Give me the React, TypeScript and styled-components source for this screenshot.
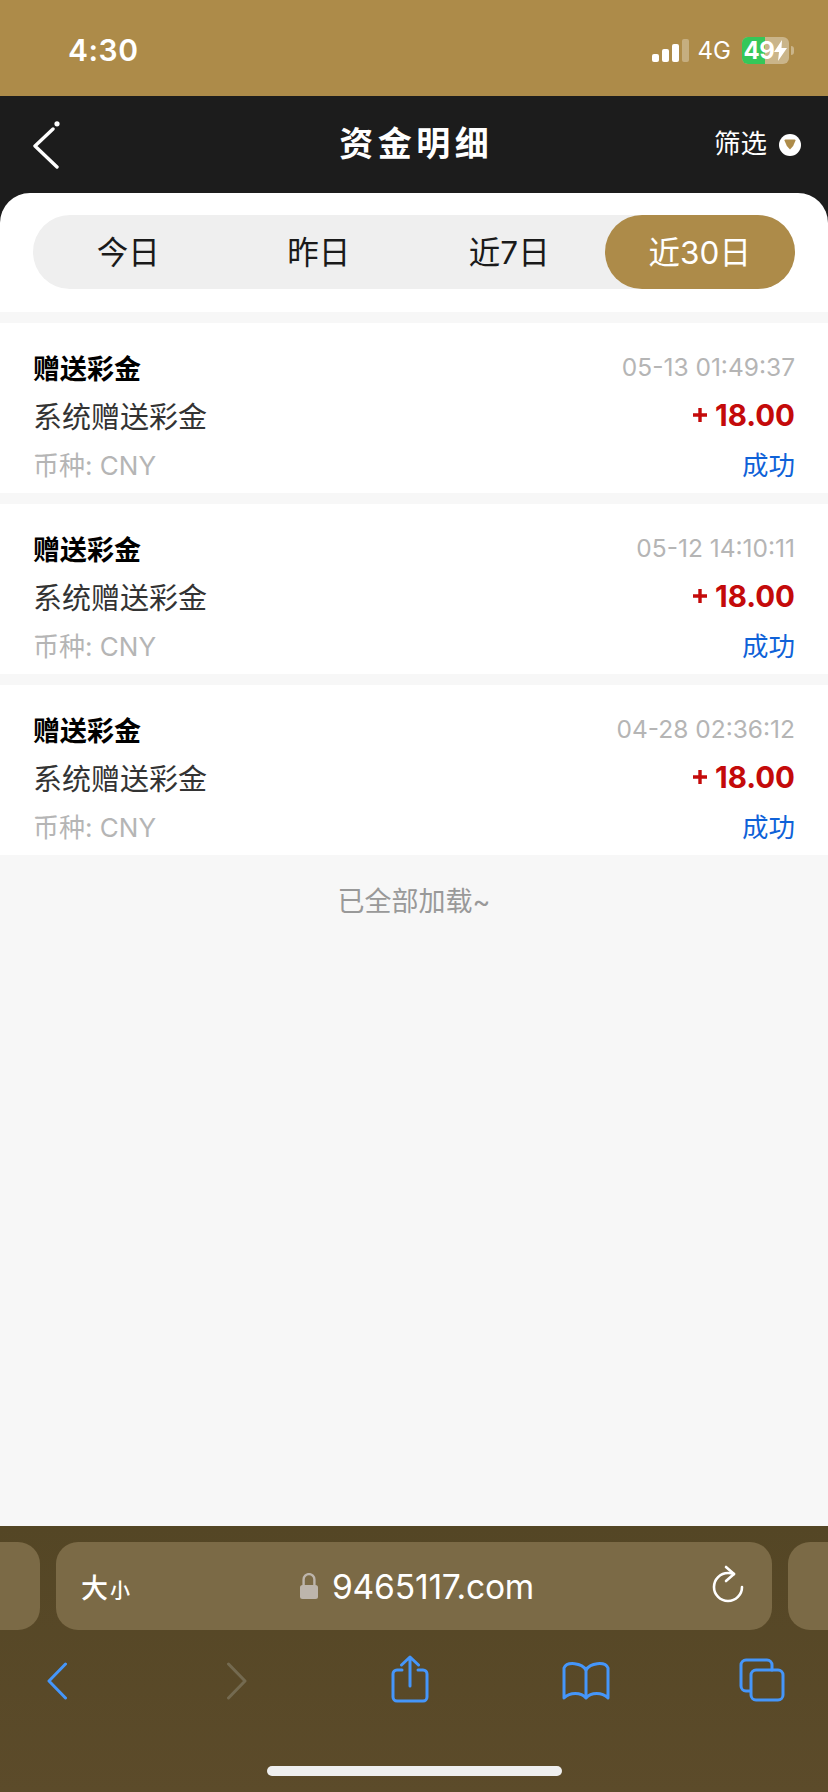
import React from 'react';
import styled, { createGlobalStyle } from 'styled-components';

const GlobalStyle = createGlobalStyle`
  html, body {
    margin: 0;
    padding: 0;
    background: #f7f7f7;
  }
  * {
    box-sizing: border-box;
  }
`;

const CJK = `Inter, 'Noto Sans CJK SC', sans-serif`;

const Page = styled.div`
  width: 828px;
  height: 1792px;
  display: flex;
  flex-direction: column;
  overflow: hidden;
  font-family: ${CJK};
  background: #f7f7f7;
`;

const StatusBar = styled.div`
  height: 96px;
  flex: none;
  background: #ad8b49;
  display: flex;
  align-items: center;
  justify-content: space-between;
  padding: 4px 34px 0 68px;
  color: #fff;
`;

const Clock = styled.div`
  font-size: 30px;
  font-weight: 600;
  letter-spacing: 0.5px;
`;

const StatusRight = styled.div`
  display: flex;
  align-items: center;
`;

const Signal = styled.div`
  display: flex;
  align-items: flex-end;
  gap: 3px;
  height: 24px;
`;

const SignalBar = styled.span<{ $h: number; $off?: boolean }>`
  width: 7px;
  height: ${(p) => p.$h}px;
  border-radius: 2px;
  background: ${(p) => (p.$off ? 'rgba(255,255,255,0.3)' : '#fff')};
`;

const Network = styled.div`
  font-size: 24px;
  margin: 0 11px 0 9px;
`;

const Battery = styled.div`
  position: relative;
  width: 47px;
  height: 27px;
  border-radius: 6px;
  overflow: hidden;
  background: rgba(255,255,255,0.36);
  display: flex;
  align-items: center;
  justify-content: center;
  font-size: 24px;
  font-weight: 700;
  letter-spacing: -0.5px;
`;

const BatteryFill = styled.span`
  position: absolute;
  left: 0;
  top: 0;
  bottom: 0;
  width: 23px;
  background: #35c759;
`;

const BatteryLabel = styled.span`
  position: relative;
  display: flex;
  align-items: center;
`;

const BatteryNub = styled.span`
  width: 3px;
  height: 9px;
  margin-left: 2px;
  border-radius: 0 3px 3px 0;
  background: rgba(255,255,255,0.36);
`;

const NavBar = styled.div`
  height: 97px;
  flex: none;
  background: #1c1c1c;
  display: grid;
  grid-template-columns: 1fr auto 1fr;
  align-items: center;
  padding: 0 27px;
  color: #fff;
`;

const BackIcon = styled.svg`
  display: block;
  margin-left: 6px;
`;

const Title = styled.div`
  font-size: 34px;
  font-weight: 700;
  letter-spacing: 4.5px;
  margin-right: -4.5px;
  padding-bottom: 6px;
`;

const Filter = styled.div`
  justify-self: end;
  display: flex;
  align-items: center;
  gap: 12px;
  font-size: 26.5px;
`;

const FilterLabel = styled.span`
  padding-bottom: 6px;
`;

const FilterDot = styled.span`
  width: 22px;
  height: 22px;
  border-radius: 50%;
  background: #fff;
  display: flex;
  align-items: center;
  justify-content: center;
`;

const SheetBack = styled.div`
  flex: none;
  background: #1c1c1c;
`;

const Sheet = styled.div`
  background: #fff;
  border-radius: 30px 30px 0 0;
  padding: 22px 33px 23px;
`;

const Tabs = styled.div`
  height: 74px;
  border-radius: 37px;
  background: #efefef;
  display: grid;
  grid-template-columns: repeat(4, 1fr);
`;

const Tab = styled.div<{ $active?: boolean }>`
  display: flex;
  align-items: center;
  justify-content: center;
  border-radius: 37px;
  padding-bottom: 4px;
  font-size: 31.5px;
  color: ${(p) => (p.$active ? '#fff' : '#1a1a1a')};
  background: ${(p) => (p.$active ? '#ad8b49' : 'transparent')};
`;

const List = styled.div`
  flex: 1;
  padding-top: 11px;
  display: flex;
  flex-direction: column;
  gap: 11px;
`;

const Card = styled.div`
  height: 170px;
  flex: none;
  background: #fff;
  padding: 20px 33px 0;
  display: grid;
  grid-template-columns: 1fr auto;
  grid-auto-rows: 48px;
  align-items: center;
`;

const Heading = styled.div`
  font-size: 27px;
  font-weight: 700;
  color: #000;
`;

const Time = styled.div`
  justify-self: end;
  font-size: 24.5px;
  color: #b5b5b5;
  font-family: Inter, sans-serif;
`;

const Desc = styled.div`
  font-size: 29px;
  color: #333;
`;

const Amount = styled.div`
  justify-self: end;
  font-size: 29.5px;
  font-weight: 700;
  color: #c40a0a;
  display: flex;
  align-items: center;
  gap: 7px;
`;

const Currency = styled.div`
  font-size: 26px;
  color: #b5b5b5;
`;

const State = styled.div`
  justify-self: end;
  font-size: 26.5px;
  color: #0f62d8;
`;

const EndNote = styled.div`
  margin-top: 14px;
  text-align: center;
  font-size: 27px;
  color: #999;
`;

const BrowserBar = styled.div`
  height: 266px;
  flex: none;
  background: linear-gradient(180deg, #544625 0%, #5c4b2a 100%);
  padding-top: 16px;
  display: flex;
  flex-direction: column;
`;

const UrlRow = styled.div`
  display: grid;
  grid-template-columns: 40px 716px 40px;
  gap: 16px;
  height: 88px;
`;

const SidePill = styled.div<{ $side: 'left' | 'right' }>`
  background: #7b6a46;
  border-radius: ${(p) => (p.$side === 'left' ? '0 22px 22px 0' : '22px 0 0 22px')};
`;

const UrlPill = styled.div`
  position: relative;
  background: #7b6a46;
  border-radius: 22px;
  display: flex;
  align-items: center;
  justify-content: space-between;
  padding: 0 28px 0 25px;
  color: #fff;
`;

const TextSize = styled.div`
  display: flex;
  align-items: baseline;
  gap: 2px;
  font-size: 27px;
  font-weight: 500;
`;

const TextSizeSmall = styled.span`
  font-size: 20px;
`;

const Address = styled.div`
  position: absolute;
  left: 244px;
  top: 0;
  bottom: 0;
  display: flex;
  align-items: center;
  gap: 14px;
  font-size: 33.6px;
  letter-spacing: -0.2px;
`;

const ToolIcon = styled.svg<{ $left?: number; $top?: number }>`
  display: block;
  flex: none;
  fill: none;
  stroke-linecap: round;
  stroke-linejoin: round;
  margin-left: ${(p) => p.$left ?? 0}px;
  margin-top: ${(p) => p.$top ?? 0}px;
`;

const ToolBar = styled.div`
  display: flex;
  align-items: flex-start;
  padding: 25px 0 0 47px;
  height: 110px;
`;

const HomeIndicator = styled.div`
  width: 295px;
  height: 10px;
  margin: 26px 0 0 267px;
  border-radius: 5px;
  background: #efefef;
`;

const records = [
  { time: '05-13 01:49:37' },
  { time: '05-12 14:10:11' },
  { time: '04-28 02:36:12' },
];

const tabs = ['今日', '昨日', '近7日', '近30日'];

const App: React.FC = () => {
  return (
    <Page>
      <GlobalStyle />
      <StatusBar>
        <Clock>4:30</Clock>
        <StatusRight>
          <Signal>
            <SignalBar $h={8} />
            <SignalBar $h={13} />
            <SignalBar $h={18} />
            <SignalBar $h={23} $off />
          </Signal>
          <Network>4G</Network>
          <Battery>
            <BatteryFill />
            <BatteryLabel>
              49
              <svg width="13" height="21" viewBox="0 0 13 21">
                <path d="M8 0 L0 12 H5 L4 21 L13 8 H7.5 Z" fill="#fff" />
              </svg>
            </BatteryLabel>
          </Battery>
          <BatteryNub />
        </StatusRight>
      </StatusBar>

      <NavBar>
        <BackIcon width="30" height="48" viewBox="0 0 30 48" fill="none">
          <path d="M20 8 L2 25 L24 46" stroke="#fff" strokeWidth="3.4" strokeLinecap="round" strokeLinejoin="round" />
          <circle cx="24" cy="2.8" r="2.6" fill="#fff" />
        </BackIcon>
        <Title>资金明细</Title>
        <Filter>
          <FilterLabel>筛选</FilterLabel>
          <FilterDot>
            <svg width="12" height="11" viewBox="0 0 12 11">
              <path d="M0.5 1.5 Q0.5 0.5 1.5 0.5 H10.5 Q11.5 0.5 11.5 1.5 Q10 7 6 10.5 Q2 7 0.5 1.5 Z" fill="#ad8b49" />
            </svg>
          </FilterDot>
        </Filter>
      </NavBar>

      <SheetBack>
        <Sheet>
          <Tabs>
            {tabs.map((t, i) => (
              <Tab key={t} $active={i === tabs.length - 1}>{t}</Tab>
            ))}
          </Tabs>
        </Sheet>
      </SheetBack>

      <List>
        {records.map((r) => (
          <Card key={r.time}>
            <Heading>赠送彩金</Heading>
            <Time>{r.time}</Time>
            <Desc>系统赠送彩金</Desc>
            <Amount>
              <svg width="16" height="16" viewBox="0 0 16 16">
                <path d="M8 1 V15 M1 8 H15" stroke="#c40a0a" strokeWidth="3.4" />
              </svg>
              18.00
            </Amount>
            <Currency>币种: CNY</Currency>
            <State>成功</State>
          </Card>
        ))}
        <EndNote>已全部加载~</EndNote>
      </List>

      <BrowserBar>
        <UrlRow>
          <SidePill $side="left" />
          <UrlPill>
            <TextSize>
              大<TextSizeSmall>小</TextSizeSmall>
            </TextSize>
            <Address>
              <svg width="18" height="26" viewBox="0 0 18 26" fill="none">
                <path d="M3.6 13 V6.5 a5.4 5.4 0 0 1 10.8 0 V13" stroke="#bdb5ac" strokeWidth="2.4" />
                <rect x="0" y="12" width="18" height="14" rx="2.5" fill="#bdb5ac" />
              </svg>
              9465117.com
            </Address>
            <ToolIcon width="32" height="42" viewBox="0 0 32 42" stroke="#fff" strokeWidth="2.6">
              <path d="M22 9 Q19 8 16 8 A14 14 0 1 0 30 22" />
              <path d="M14 2 L22 9 L14 16" />
            </ToolIcon>
          </UrlPill>
          <SidePill $side="right" />
        </UrlRow>

        <ToolBar>
          <ToolIcon width="20" height="38" viewBox="0 0 20 38" stroke="#4596fa" strokeWidth="3" $top={7}>
            <path d="M18.5 2 L2 19 L18.5 36" />
          </ToolIcon>
          <ToolIcon width="20" height="38" viewBox="0 0 20 38" stroke="#746a50" strokeWidth="3" $top={7} $left={160}>
            <path d="M1.5 2 L18 19 L1.5 36" />
          </ToolIcon>
          <ToolIcon width="38" height="48" viewBox="0 0 38 48" stroke="#4596fa" strokeWidth="3" $left={144}>
            <path d="M11 15 H6 a4 4 0 0 0 -4 4 V42 a4 4 0 0 0 4 4 H32 a4 4 0 0 0 4 -4 V19 a4 4 0 0 0 -4 -4 H27" />
            <path d="M19 31 V2 M10.5 10 L19 2 L27.5 10" />
          </ToolIcon>
          <ToolIcon width="48" height="38" viewBox="0 0 48 38" stroke="#4596fa" strokeWidth="3" $top={7} $left={133}>
            <path d="M24 8 C20 1 5 -1 2 6 V36 C8 30 19 30 24 36 C29 30 40 30 46 36 V6 C43 -1 28 1 24 8 Z" />
            <path d="M24 8 V35" />
          </ToolIcon>
          <ToolIcon width="46" height="44" viewBox="0 0 46 44" stroke="#4596fa" strokeWidth="3" $top={3} $left={129}>
            <path d="M11 33 H7 a5 5 0 0 1 -5 -5 V7 a5 5 0 0 1 5 -5 H28 a5 5 0 0 1 5 5 V12" />
            <rect x="12" y="12" width="32" height="30" rx="5" />
          </ToolIcon>
        </ToolBar>

        <HomeIndicator />
      </BrowserBar>
    </Page>
  );
};

export default App;
